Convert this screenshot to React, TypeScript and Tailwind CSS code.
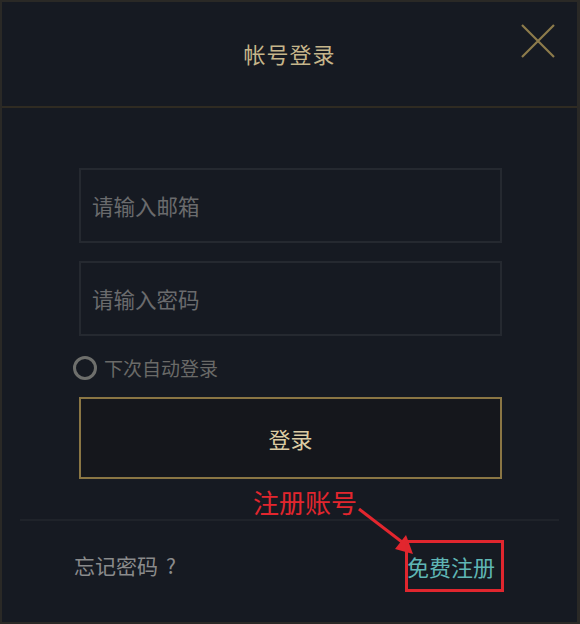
import React, {useState} from 'react';

const font = {fontFamily: '"Microsoft YaHei", "Noto Sans CJK SC", "Noto Sans", sans-serif'};

const CloseIcon = () => (
    <svg width="38" height="38" viewBox="0 0 38 38" fill="none">
        <path d="M3 3 L35 35 M35 3 L3 35" stroke="#8d7b4b" strokeWidth="2.2" />
    </svg>
)

const App = () => {
    const [remember, setRemember] = useState(false);
    const [account, setAccount] = useState({email: "", password: ""});

    const handleChange = (e: React.ChangeEvent<HTMLInputElement>) => {
        setAccount({...account, [e.target.name]: e.target.value});
    }

    return (
        <div style={font} className="relative w-[580px] h-[624px] bg-[#161a22] border-2 border-[#2a2926] border-r-[3px] flex flex-col">
            <div className="relative h-[106px] flex items-center justify-center border-b-2 border-[#2f2b22]">
                <span className="text-[22px] text-[#c6b68b] tracking-[1px] mt-[-2px]">帐号登录</span>
                <button className="absolute right-[20px] top-[20px] cursor-pointer">
                    <CloseIcon />
                </button>
            </div>

            <div className="flex flex-col pl-[77px] pr-[75px] pt-[60px]">
                <div className="h-[75px] border-2 border-[#252930] flex items-center">
                    <input name="email" value={account.email} onChange={handleChange} placeholder="请输入邮箱"
                           className="w-full h-full bg-transparent px-[11px] text-[21.5px] text-[#9a9a9a] placeholder:text-[#6a6b6d] outline-none" />
                </div>
                <div className="h-[75px] mt-[18px] border-2 border-[#252930] flex items-center">
                    <input name="password" type="password" value={account.password} onChange={handleChange} placeholder="请输入密码"
                           className="w-full h-full bg-transparent px-[11px] text-[21.5px] text-[#9a9a9a] placeholder:text-[#6a6b6d] outline-none" />
                </div>

                <label className="flex items-center gap-[7px] mt-[19px] -ml-[6px] h-[26px] cursor-pointer" onClick={() => setRemember(!remember)}>
                    <span className="w-[24px] h-[24px] rounded-full border-[3px] border-[#6e6f6c] flex items-center justify-center">
                        {remember && <span className="w-[10px] h-[10px] rounded-full bg-[#c6b68b]" />}
                    </span>
                    <span className="text-[19px] text-[#6a6a68]">下次自动登录</span>
                </label>

                <button className="mt-[16px] h-[82px] border-2 border-[#8a7644] bg-[#15171c] text-[22px] text-[#dccca3] cursor-pointer">
                    登录
                </button>
            </div>

            <div className="mt-[40px] mx-[18px] border-t-2 border-[#1f232a]" />

            <div className="flex items-center justify-between pl-[72px] pr-[82px] h-[94px] mt-[-2px]">
                <span className="text-[21px] text-[#8a8b8c]">忘记密码<span className="inline-block w-[26px] text-center">?</span></span>
                <a className="text-[22px] text-[#5fb6b5] cursor-pointer">免费注册</a>
            </div>

            {/* annotation */}
            <span className="absolute left-[251px] top-[480px] text-[26px] text-[#e2262e]">注册账号</span>
            <svg className="absolute left-0 top-0 pointer-events-none" width="580" height="624">
                <path d="M357 507 L400 540" stroke="#e2262e" strokeWidth="3" />
                <path d="M411 552 L393 547 L404 533 Z" fill="#e2262e" />
            </svg>
            <div className="absolute left-[403px] top-[538px] w-[99px] h-[52px] border-[3px] border-[#e0262e]" />
        </div>
    )
}

export default App;
